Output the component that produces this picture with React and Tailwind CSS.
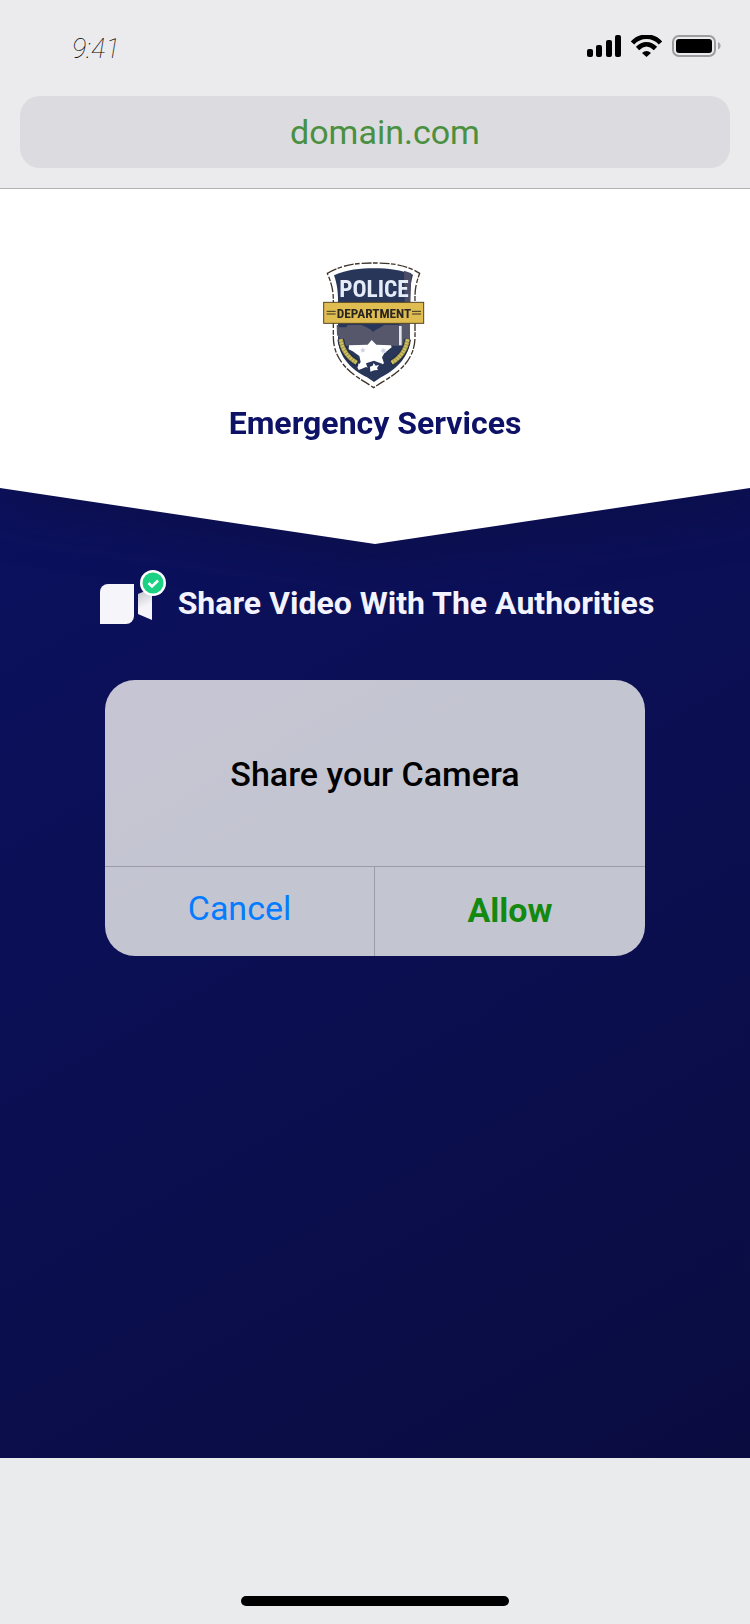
function StatusIcons() {
  return (
    <svg viewBox="0 0 134 22" className="h-[22px] w-[134px]" aria-hidden="true">
      <rect x="0" y="14" width="6" height="8" rx="2" />
      <rect x="9" y="10" width="6" height="12" rx="2" />
      <rect x="19" y="5" width="6" height="17" rx="2" />
      <rect x="28" y="0" width="6" height="22" rx="2" />
      <g fill="none" stroke="#000" strokeWidth="4.600">
        <path d="M45.500 8C53-.4 66-.4 73.500 8" />
        <path d="M50.500 13.500C56 8 63 8 68.500 13.500" />
      </g>
      <path d="M55 18c3-2.700 6-2.700 9 0L59.500 22z" />
      <rect x="86" y="1" width="42" height="20" rx="6" fill="none" stroke="#9d9d9f" strokeWidth="2" />
      <rect x="89" y="4" width="36" height="14" rx="3" />
      <path d="M131 7c3.500 1.500 3.500 6 0 7.500z" fill="#a5a5a7" />
    </svg>
  );
}

function PoliceBadge() {
  return (
    <svg viewBox="0 0 390 450" className="h-[150px] w-[130px]" role="img" aria-label="Police Department">
      <path
        d="M52 70C100 42 145 39 193 39c50 0 95 5 136 31-9 25-15 45-14 80v110c0 75-55 110-101 138l-23 15-23-15C120 370 70 330 70 260V150C70 115 62 95 52 70z"
        fill="#fff"
        stroke="#3d342c"
        strokeWidth="4"
        strokeDasharray="30 4 14 6"
      />
      <path
        d="M72 76C112 59 150 55 193 55c43 0 80 5 116 19-7 24-9 46-9 76v115c0 60-48 97-87 117l-21 14-21-14C130 362 84 325 84 262V150c0-30-4-52-12-74z"
        fill="#28365a"
      />
      <path d="M282 62l22 8-4 130-14 20z" fill="#4b4d66" />
      <path d="M80 225h95l14 22 16-22h63v-4h32v44l-24 22H106l-25-32z" fill="#56576b" />
      <path d="M84 220h34l-10 12H86zM142 220h88l-18 12-22 12-20-12z" fill="#28365a" />
      <path d="M267 228h8v58h-8z" fill="#e5e7ee" />
      <path
        d="M117 286l56-2 12-14 14 14 44 2 2 6-22 18-7 12 6 18-12 8-12 14-18-6-12-5-22 9-4-8 10-16-4-18-20-14-12-6z"
        fill="#fff"
      />
      <path d="M145 340l8 5 6 9-10 2-4-6z" fill="#fff" />
      <path d="M168 340l24-8 26 10-6 12-10 10-12 6-14-8-4-10z" fill="#28365a" />
      <path d="M180 350l8-3 3-8 6 8 10-2-6 9 3 6-11 1-12 4z" fill="#fff" />
      <path d="M218 293l4 5 6-1-3 6 3 5-7-1-4 5-1-7-6-2 6-3zM157 292l4 5 5 0-3 5 1 5-5-2-5 3 0-6-4-3 6-1z" fill="#cdd5e3" />
      <g fill="none" stroke="#1d2947" strokeWidth="20">
        <path d="M92 268c5 34 24 58 50 71" />
        <path d="M293 268c-5 34-24 58-50 71" />
      </g>
      <g fill="none" stroke="#8f853f" strokeWidth="14">
        <path d="M92 268c5 32 22 55 48 70" />
        <path d="M293 268c-5 32-22 55-48 70" />
      </g>
      <g fill="none" stroke="#cfc063" strokeWidth="10" strokeDasharray="7 2">
        <path d="M92 268c5 32 22 55 48 70" />
        <path d="M293 268c-5 32-22 55-48 70" />
      </g>
      <rect x="41" y="157" width="300" height="63" fill="#dfbd50" stroke="#544727" strokeWidth="3" />
      <path d="M50 184h27M50 192h27M306 184h27M306 192h27" stroke="#3b3427" strokeWidth="3" />
      <text x="192" y="142" textAnchor="middle" fontSize="70" className="fill-[#e5ecf8] font-['Roboto_Condensed','Liberation_Sans_Narrow',sans-serif] font-bold">POLICE</text>
      <text x="192" y="203" textAnchor="middle" fontSize="40" className="fill-[#292521] font-['Roboto_Condensed','Liberation_Sans_Narrow',sans-serif] font-bold">DEPARTMENT</text>
    </svg>
  );
}

function VideoIcon() {
  return (
    <svg viewBox="0 0 68 56" className="h-14 w-[68px] shrink-0" aria-hidden="true">
      <defs>
        <linearGradient id="lens" x1="0.300" y1="0" x2="0.500" y2="1">
          <stop offset="0" stopColor="#bfc0cb" />
          <stop offset="0.600" stopColor="#f5f5f9" />
        </linearGradient>
      </defs>
      <path d="M8 14h26v32a8 8 0 0 1-8 8H0V22a8 8 0 0 1 8-8z" fill="#f5f5fa" />
      <path d="M38 24l14-6v32l-14-6z" fill="url(#lens)" />
      <circle cx="53" cy="13" r="13" fill="#fff" />
      <circle cx="53" cy="13" r="10.500" fill="#1bd184" />
      <path d="M48.500 13l3.500 3.500 6-6" fill="none" stroke="#fff" strokeWidth="2.500" />
    </svg>
  );
}

export default function App() {
  return (
    <div className="flex min-h-screen flex-col bg-[#e9ebec] font-[Roboto,sans-serif]">
      <header className="border-b border-[#b2b2b4] bg-[#ebebed] px-5 pb-5">
        <div className="flex h-24 items-start justify-between pt-[35px] pr-[9px] pl-[52px]">
          <time className="text-[27px] leading-7 font-thin text-black italic">9:41</time>
          <StatusIcons />
        </div>
        <input
          type="text"
          aria-label="Address"
          defaultValue="domain.com"
          className="block h-18 w-full rounded-[20px] bg-[#dcdbe0] pl-5 text-center text-[34px] text-[#4a9040] outline-none"
        />
      </header>

      <main className="flex grow flex-col overflow-hidden bg-linear-150 from-[#0c1264] via-[#0b0f54] via-50% to-[#0a0c40]">
        <div className="drop-shadow-[0_16px_24px_#0c0e46b3]">
          <section className="flex flex-col items-center bg-white pt-[61px] pb-[101px] [clip-path:polygon(0_0,100%_0,100%_299px,50%_100%,0_299px)]">
            <PoliceBadge />
            <h1 className="pt-[3px] text-[32px] leading-10 font-bold text-[#0d1266]">Emergency Services</h1>
          </section>
        </div>

        <div className="relative flex items-center justify-center gap-[10px] pt-[26px] pl-1">
          <VideoIcon />
          <h2 className="pt-[10px] text-[32px] leading-10 font-bold text-[#f3f3ff]">Share Video With The Authorities</h2>
        </div>

        <section
          role="dialog"
          aria-labelledby="camera-title"
          className="relative mx-auto mt-[54px] w-[72%] overflow-hidden rounded-[30px] bg-linear-150 from-[#c7c5d4] to-[#c3c5d1] to-50%"
        >
          <h3 id="camera-title" className="pt-[74px] pb-[72px] text-center text-[34px] leading-10 font-medium text-black">
            Share your Camera
          </h3>
          <div className="grid grid-cols-2 border-t border-[#9b9baa] text-[34px] leading-10">
            <button type="button" className="h-[89px] border-r border-[#9b9baa] pb-2 text-[#047cff]">Cancel</button>
            <button type="button" className="h-[89px] pb-1 font-bold text-[#14890f]">Allow</button>
          </div>
        </section>
      </main>

      <footer className="flex h-[166px] items-end justify-center pb-[18px]">
        <div className="h-[10px] w-[268px] rounded-full bg-black" />
      </footer>
    </div>
  );
}
